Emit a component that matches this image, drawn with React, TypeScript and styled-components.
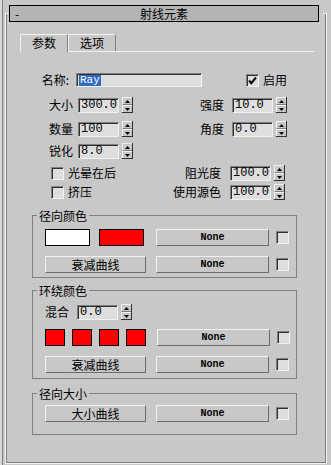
import React from "react";
import styled, { createGlobalStyle, css } from "styled-components";

const face = "#c8c8c8";
const light = "#f2f2f2";
const shadow = "#808080";
const dark = "#303030";
const field = "#dedede";

const cjk = `"Noto Sans CJK SC", "Noto Sans", sans-serif`;
const mono = `"Liberation Mono", "DejaVu Sans Mono", monospace`;

const GlobalStyle = createGlobalStyle`
  html, body {
    margin: 0;
    padding: 0;
    background: ${face};
  }
  body {
    font-family: ${cjk};
    font-size: 12px;
    color: #000;
  }
`;

const sunken = css`
  box-sizing: border-box;
  border: 1px solid;
  border-color: ${shadow} ${light} ${light} ${shadow};
  box-shadow: inset 1px 1px 0 ${dark};
  background: ${field};
`;

const Page = styled.div`
  box-sizing: border-box;
  width: 331px;
  height: 465px;
  display: flex;
  border-left: 2px solid #d8d8d8;
  background: ${face};
  overflow: hidden;
`;

const Panel = styled.div`
  display: flex;
  border-left: 1px solid ${shadow};
  padding-left: 2px;
`;

const Rollout = styled.div`
  box-sizing: border-box;
  width: 322px;
  height: 451px;
  margin-top: 13px;
  border: 1px solid ${light};
  box-shadow: inset 1px 0 0 ${shadow}, inset -1px -1px 0 ${shadow};
`;

const HeaderWrap = styled.div`
  margin: -9px 3px 0 2px;
  padding: 0 4px 0 1px;
  background: ${face};
`;

const Header = styled.div`
  box-sizing: border-box;
  height: 17px;
  border: 1px solid #000;
  background: #b4b4b4;
  display: grid;
  grid-template-columns: 1fr auto 1fr;
  align-items: center;
  line-height: 15px;
`;

const Collapse = styled.span`
  padding-left: 5px;
  font-size: 12px;
`;

const TabBar = styled.div`
  display: flex;
  align-items: flex-end;
  width: 294px;
  height: 17px;
  margin: 12px 0 0 14px;
  border-bottom: 1px solid ${light};
`;

const Tab = styled.div<{ $active?: boolean }>`
  box-sizing: border-box;
  width: 48px;
  height: ${(p) => (p.$active ? 18 : 17)}px;
  margin-bottom: ${(p) => (p.$active ? -1 : 0)}px;
  border-top: 1px solid ${light};
  border-left: 1px solid ${light};
  border-right: 1px solid ${shadow};
  border-radius: 2px 2px 0 0;
  background: ${face};
  text-align: center;
  line-height: 15px;
`;

const Row = styled.div<{ $mt: number; $h?: number }>`
  display: flex;
  align-items: center;
  height: ${(p) => p.$h ?? 16}px;
  margin-top: ${(p) => p.$mt}px;
`;

const Label = styled.span<{ $w: number }>`
  flex: none;
  width: ${(p) => p.$w}px;
  text-align: right;
  white-space: nowrap;
  line-height: 14px;
`;

const NameField = styled.div`
  ${sunken};
  width: 126px;
  height: 14px;
  margin-left: 7px;
  padding-left: 2px;
  display: flex;
  align-items: center;
`;

const Selected = styled.span`
  background: #316ac5;
  color: #fff;
  font-family: ${mono};
  font-size: 11px;
  line-height: 11px;
  padding: 0 1px;
`;

const CheckItem = styled.div<{ $ml: number; $w?: number }>`
  display: flex;
  align-items: center;
  flex: none;
  margin-left: ${(p) => p.$ml}px;
  width: ${(p) => (p.$w ? `${p.$w}px` : "auto")};
`;

const Box = styled.div<{ $ml?: number }>`
  ${sunken};
  flex: none;
  width: 13px;
  height: 13px;
  margin-left: ${(p) => p.$ml ?? 0}px;
  display: flex;
  align-items: center;
  justify-content: center;
`;

const CheckText = styled.span`
  margin-left: 4px;
  line-height: 14px;
`;

const NumField = styled.div<{ $ml: number }>`
  ${sunken};
  flex: none;
  width: 41px;
  height: 15px;
  margin-left: ${(p) => p.$ml}px;
  padding-left: 2px;
  font-family: ${mono};
  font-size: 12px;
  line-height: 13px;
`;

const SpinBox = styled.div`
  box-sizing: border-box;
  flex: none;
  display: flex;
  flex-direction: column;
  width: 11px;
  height: 16px;
  margin-left: 3px;
  border-right: 1px solid ${dark};
  border-bottom: 1px solid ${dark};
`;

const SpinHalf = styled.div<{ $top?: boolean }>`
  flex: 1;
  display: flex;
  align-items: center;
  justify-content: center;
  border-top: 1px solid ${light};
  border-left: 1px solid ${light};
  border-bottom: ${(p) => (p.$top ? `1px solid ${shadow}` : "none")};
`;

const Group = styled.fieldset<{ $mt: number }>`
  box-sizing: border-box;
  width: 265px;
  min-width: 0;
  margin: ${(p) => p.$mt}px 0 0 26px;
  padding: 0;
  border: 1px solid ${shadow};
`;

const Legend = styled.legend`
  margin-left: 4px;
  padding: 0 2px;
  font-size: 12px;
  line-height: 13px;
`;

const GroupBody = styled.div<{ $pt: number; $pb: number }>`
  padding: ${(p) => p.$pt}px 0 ${(p) => p.$pb}px 12px;
`;

const Swatch = styled.div<{ $w: number; $color: string; $ml?: number }>`
  box-sizing: border-box;
  flex: none;
  width: ${(p) => p.$w}px;
  height: 17px;
  margin-left: ${(p) => p.$ml ?? 0}px;
  border: 1px solid #000;
  background: ${(p) => p.$color};
`;

const Button = styled.button<{ $w: number; $ml?: number; $mono?: boolean }>`
  box-sizing: border-box;
  flex: none;
  width: ${(p) => p.$w}px;
  height: 17px;
  margin: 0 0 0 ${(p) => p.$ml ?? 0}px;
  padding: 0;
  border: 1px solid;
  border-color: ${light} #6c6c6c #6c6c6c ${light};
  background: ${face};
  color: #000;
  font-family: ${(p) => (p.$mono ? mono : cjk)};
  font-size: ${(p) => (p.$mono ? 10 : 12)}px;
  font-weight: ${(p) => (p.$mono ? 600 : 400)};
  line-height: 15px;
`;

const Up = () => (
  <svg width="5" height="3" viewBox="0 0 5 3">
    <path d="M0 3h5L2.5 0z" fill="#000" />
  </svg>
);

const Down = () => (
  <svg width="5" height="3" viewBox="0 0 5 3">
    <path d="M0 0h5L2.5 3z" fill="#000" />
  </svg>
);

const Spinner = ({ value, ml }: { value: string; ml: number }) => (
  <>
    <NumField $ml={ml}>{value}</NumField>
    <SpinBox>
      <SpinHalf $top>
        <Up />
      </SpinHalf>
      <SpinHalf>
        <Down />
      </SpinHalf>
    </SpinBox>
  </>
);

const Check = ({ checked, ml }: { checked?: boolean; ml?: number }) => (
  <Box $ml={ml}>
    {checked && (
      <svg width="9" height="9" viewBox="0 0 9 9">
        <path d="M1 4.5l2.3 2.6L8 1.5" fill="none" stroke="#000" strokeWidth="2" />
      </svg>
    )}
  </Box>
);

export default function App() {
  return (
    <>
      <GlobalStyle />
      <Page>
        <Panel>
          <Rollout>
            <HeaderWrap>
              <Header>
                <Collapse>-</Collapse>
                <span>射线元素</span>
                <span />
              </Header>
            </HeaderWrap>

            <TabBar>
              <Tab $active>参数</Tab>
              <Tab>选项</Tab>
            </TabBar>

            <Row $mt={20}>
              <Label $w={63}>名称:</Label>
              <NameField>
                <Selected>Ray</Selected>
              </NameField>
              <CheckItem $ml={44}>
                <Check checked />
                <CheckText>启用</CheckText>
              </CheckItem>
            </Row>

            <Row $mt={9}>
              <Label $w={67}>大小</Label>
              <Spinner value="300.0" ml={5} />
              <Label $w={91}>强度</Label>
              <Spinner value="10.0" ml={8} />
            </Row>

            <Row $mt={8}>
              <Label $w={67}>数量</Label>
              <Spinner value="100" ml={5} />
              <Label $w={91}>角度</Label>
              <Spinner value="0.0" ml={8} />
            </Row>

            <Row $mt={6}>
              <Label $w={67}>锐化</Label>
              <Spinner value="8.0" ml={5} />
            </Row>

            <Row $mt={6}>
              <CheckItem $ml={45} $w={81}>
                <Check />
                <CheckText>光晕在后</CheckText>
              </CheckItem>
              <Label $w={89}>阻光度</Label>
              <Spinner value="100.0" ml={9} />
            </Row>

            <Row $mt={3}>
              <CheckItem $ml={45} $w={81}>
                <Check />
                <CheckText>挤压</CheckText>
              </CheckItem>
              <Label $w={89}>使用源色</Label>
              <Spinner value="100.0" ml={9} />
            </Row>

            <Group $mt={9}>
              <Legend>径向颜色</Legend>
              <GroupBody $pt={7} $pb={4}>
                <Row $mt={0} $h={17}>
                  <Swatch $w={45} $color="#ffffff" />
                  <Swatch $w={45} $color="#ff0000" $ml={9} />
                  <Button $w={113} $ml={12} $mono>
                    None
                  </Button>
                  <Check ml={7} />
                </Row>
                <Row $mt={10} $h={17}>
                  <Button $w={101}>衰减曲线</Button>
                  <Button $w={113} $ml={10} $mono>
                    None
                  </Button>
                  <Check ml={7} />
                </Row>
              </GroupBody>
            </Group>

            <Group $mt={6}>
              <Legend>环绕颜色</Legend>
              <GroupBody $pt={7} $pb={5}>
                <Row $mt={0}>
                  <Label $w={24}>混合</Label>
                  <Spinner value="0.0" ml={8} />
                </Row>
                <Row $mt={9} $h={17}>
                  <Swatch $w={20} $color="#ff0000" />
                  <Swatch $w={20} $color="#ff0000" $ml={7} />
                  <Swatch $w={20} $color="#ff0000" $ml={7} />
                  <Swatch $w={20} $color="#ff0000" $ml={7} />
                  <Button $w={113} $ml={11} $mono>
                    None
                  </Button>
                  <Check ml={7} />
                </Row>
                <Row $mt={10} $h={17}>
                  <Button $w={101}>衰减曲线</Button>
                  <Button $w={113} $ml={10} $mono>
                    None
                  </Button>
                  <Check ml={7} />
                </Row>
              </GroupBody>
            </Group>

            <Group $mt={8}>
              <Legend>径向大小</Legend>
              <GroupBody $pt={5} $pb={12}>
                <Row $mt={0} $h={17}>
                  <Button $w={101}>大小曲线</Button>
                  <Button $w={113} $ml={10} $mono>
                    None
                  </Button>
                  <Check ml={7} />
                </Row>
              </GroupBody>
            </Group>
          </Rollout>
        </Panel>
      </Page>
    </>
  );
}
